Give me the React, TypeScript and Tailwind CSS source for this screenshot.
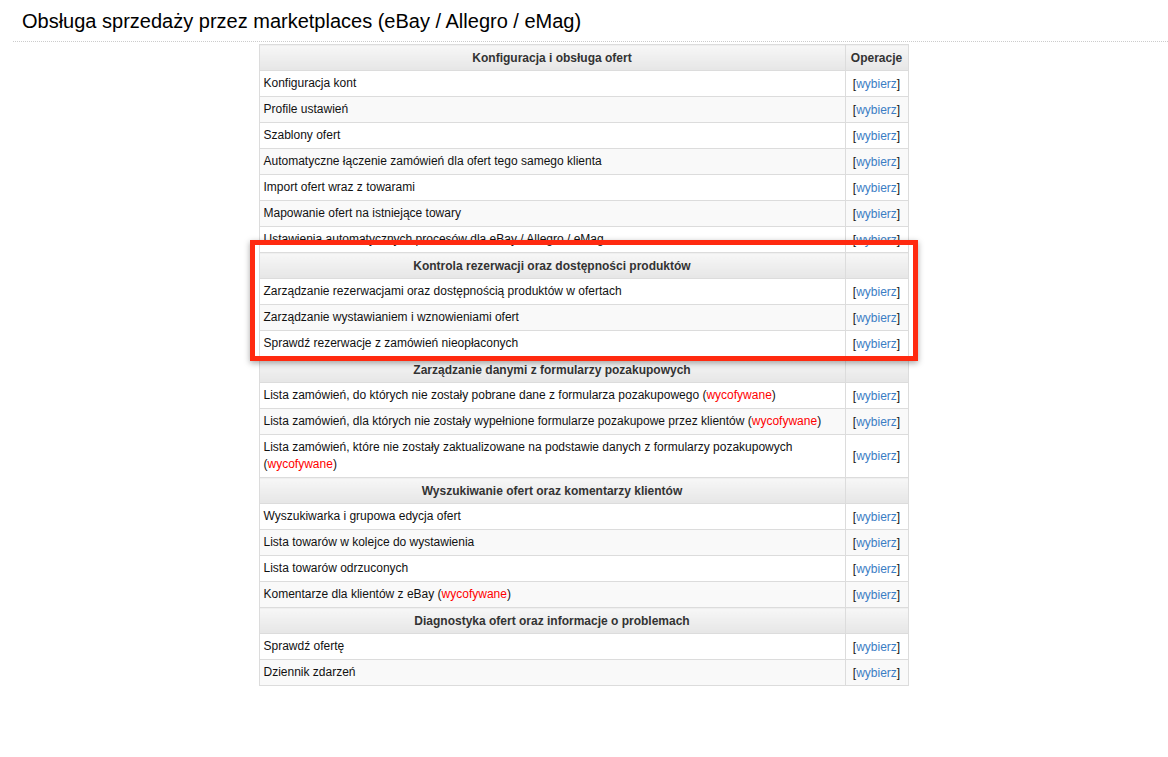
type Row = { t: string; old?: boolean; pre?: string; post?: string };
type Section = { h: string; rows: Row[] };

const sections: Section[] = [
  {
    h: "Konfiguracja i obsługa ofert",
    rows: [
      { t: "Konfiguracja kont" },
      { t: "Profile ustawień" },
      { t: "Szablony ofert" },
      { t: "Automatyczne łączenie zamówień dla ofert tego samego klienta" },
      { t: "Import ofert wraz z towarami" },
      { t: "Mapowanie ofert na istniejące towary" },
      { t: "Ustawienia automatycznych procesów dla eBay / Allegro / eMag" },
    ],
  },
  {
    h: "Kontrola rezerwacji oraz dostępności produktów",
    rows: [
      { t: "Zarządzanie rezerwacjami oraz dostępnością produktów w ofertach" },
      { t: "Zarządzanie wystawianiem i wznowieniami ofert" },
      { t: "Sprawdź rezerwacje z zamówień nieopłaconych" },
    ],
  },
  {
    h: "Zarządzanie danymi z formularzy pozakupowych",
    rows: [
      { t: "Lista zamówień, do których nie zostały pobrane dane z formularza pozakupowego", old: true },
      { t: "Lista zamówień, dla których nie zostały wypełnione formularze pozakupowe przez klientów", old: true },
      { t: "Lista zamówień, które nie zostały zaktualizowane na podstawie danych z formularzy pozakupowych", old: true },
    ],
  },
  {
    h: "Wyszukiwanie ofert oraz komentarzy klientów",
    rows: [
      { t: "Wyszukiwarka i grupowa edycja ofert" },
      { t: "Lista towarów w kolejce do wystawienia" },
      { t: "Lista towarów odrzuconych" },
      { t: "Komentarze dla klientów z eBay", old: true },
    ],
  },
  {
    h: "Diagnostyka ofert oraz informacje o problemach",
    rows: [{ t: "Sprawdź ofertę" }, { t: "Dziennik zdarzeń" }],
  },
];

const hdr = "h-[26px] border border-[#dcdcdc] bg-gradient-to-b from-[#f7f7f7] to-[#e6e6e6] font-bold text-[#333] text-center";

export default function App() {
  return (
    <div className="relative min-h-[757px] bg-white text-[12px] text-[#111]" style={{ fontFamily: '"Liberation Sans", Arial, sans-serif' }}>
      <div className="ml-[13px] border-b border-dotted border-[#ccc] pl-[9px] pt-[6px] pb-[5px] text-[20px] text-black">
        Obsługa sprzedaży przez marketplaces (eBay / Allegro / eMag)
      </div>
      <div className="flex justify-center pt-[2px] pl-[-1px]">
        <table className="w-[650px] ml-[-1px] border-collapse">
          <tbody>
            {sections.map((s, si) => (
              <>
                <tr key={"h" + si}>
                  <td className={hdr}>{s.h}</td>
                  <td className={hdr + " w-[63px]"}>{si === 0 ? "Operacje" : ""}</td>
                </tr>
                {s.rows.map((r, ri) => (
                  <tr key={si + "-" + ri} className={ri % 2 ? "bg-[#f9f9f9]" : "bg-white"}>
                    <td className="h-[26px] border border-[#dcdcdc] px-[4px] py-[4px] leading-[17px]">
                      {r.t}
                      {r.old && (
                        <>
                          {" "}(<span className="text-[#ff0000]">wycofywane</span>)
                        </>
                      )}
                    </td>
                    <td className="border border-[#dcdcdc] text-center">
                      [<span className="text-[#3b7dc4]">wybierz</span>]
                    </td>
                  </tr>
                ))}
              </>
            ))}
          </tbody>
        </table>
      </div>
      <div className="absolute left-[250px] top-[240px] h-[121px] w-[668px] border-[5px] border-[#ff2a10] shadow-[0_2px_6px_rgba(0,0,0,0.35)]" />
    </div>
  );
}
